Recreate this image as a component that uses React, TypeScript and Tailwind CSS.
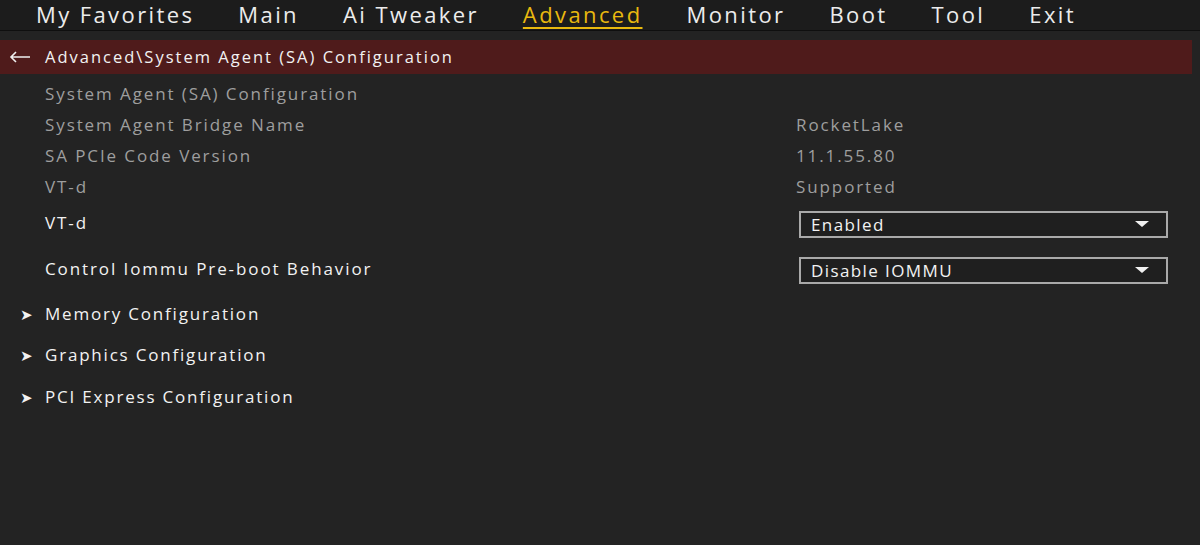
import React from "react";

const tabs = ["My Favorites", "Main", "Ai Tweaker", "Advanced", "Monitor", "Boot", "Tool", "Exit"];

const infoRows = [
  { label: "System Agent Bridge Name", value: "RocketLake" },
  { label: "SA PCIe Code Version", value: "11.1.55.80" },
  { label: "VT-d", value: "Supported" },
];

const subMenus = ["Memory Configuration", "Graphics Configuration", "PCI Express Configuration"];

function Dropdown({ value }: { value: string }) {
  return (
    <div className="mt-[2px] w-[369px] h-[27px] border-2 border-[#a9a9a9] bg-[#1f1f1f] flex items-center justify-between pl-[10px] pr-[17px]">
      <span className="text-[17px] font-medium text-[#f2f2f2] tracking-[1.4px] leading-none">{value}</span>
      <svg width="14" height="6" viewBox="0 0 14 6">
        <path d="M0 0 L14 0 L7 6 Z" fill="#f0f0f0" />
      </svg>
    </div>
  );
}

export default function App() {
  return (
    <div className="w-[1200px] h-[545px] bg-[#232323] text-white overflow-hidden" style={{ fontFamily: '"Open Sans", "Noto Sans", sans-serif' }}>
      {/* top tabs */}
      <div className="h-[31px] bg-[#1c1c1c] border-b border-[#0f0f0f] flex items-start pt-[1px] pl-[36px] gap-[44px]">
        {tabs.map((t) => (
          <span
            key={t}
            className={
              t === "Advanced"
                ? "text-[22px] leading-[26px] text-[#e9b90f] underline decoration-2 underline-offset-[4px] tracking-[2.4px]"
                : "text-[22px] leading-[26px] text-[#ececec] tracking-[2.4px]"
            }
          >
            {t}
          </span>
        ))}
      </div>

      {/* breadcrumb bar */}
      <div className="pt-[9px] pr-[8px]">
        <div className="h-[34px] bg-[#4f1b1b] flex items-center gap-[14px] pl-[9px]">
          <svg width="22" height="12" viewBox="0 0 22 12">
            <path d="M21 6 H2 M7 1 L2 6 L7 11" stroke="#f0f0f0" strokeWidth="1.6" fill="none" />
          </svg>
          <span className="text-[16.5px] font-medium text-[#f2f2f2] tracking-[2px]">Advanced\System Agent (SA) Configuration</span>
        </div>
      </div>

      {/* settings list */}
      <div className="pt-[4px] pl-[45px] pr-[32px] text-[17px] tracking-[1.9px]">
        <div className="h-[31px] flex items-center text-[#9e9e9e]">
          <span>System Agent (SA) Configuration</span>
        </div>
        {infoRows.map((r) => (
          <div key={r.label} className="h-[31px] flex items-center text-[#9e9e9e]">
            <span className="w-[751px]">{r.label}</span>
            <span>{r.value}</span>
          </div>
        ))}
        <div className="h-[42px] flex items-center justify-between">
          <span className="text-[#f2f2f2]">VT-d</span>
          <Dropdown value="Enabled" />
        </div>
        <div className="h-[50px] flex items-center justify-between">
          <span className="text-[#f2f2f2] -mt-[1px]">Control Iommu Pre-boot Behavior</span>
          <Dropdown value="Disable IOMMU" />
        </div>
      </div>

      <div className="pl-[20px] text-[17px] tracking-[1.8px] text-[#f2f2f2] font-medium">
        <div className="h-[40px] flex items-center gap-[12px]">
          <span className="text-[15px] w-[13px] tracking-normal">➤</span>
          <span>{subMenus[0]}</span>
        </div>
        {subMenus.slice(1).map((s) => (
          <div key={s} className="h-[42px] flex items-center gap-[12px]">
            <span className="text-[15px] w-[13px] tracking-normal">➤</span>
            <span>{s}</span>
          </div>
        ))}
      </div>
    </div>
  );
}
